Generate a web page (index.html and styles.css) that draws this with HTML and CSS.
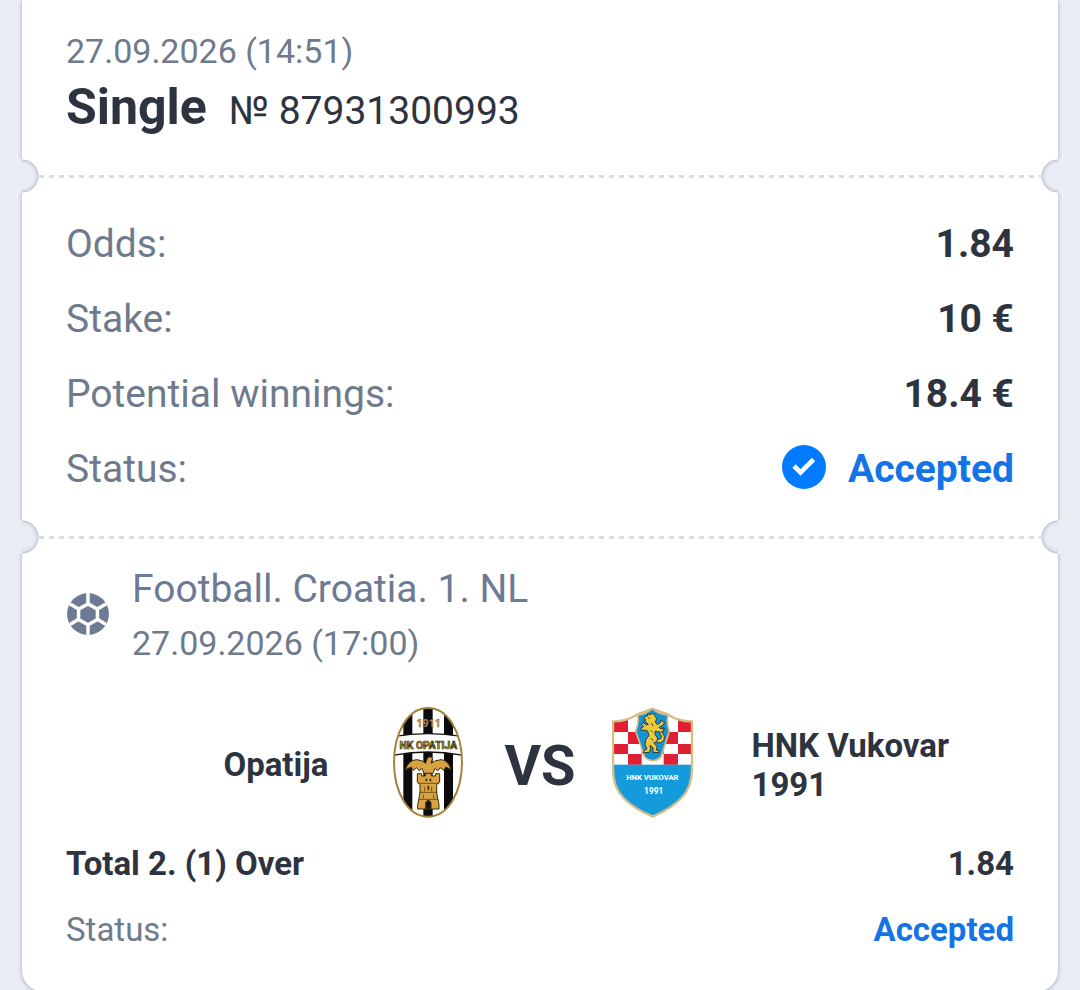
FILE: index.html
```html
<!DOCTYPE html>
<html lang="en">
<head>
<meta charset="utf-8">
<meta name="viewport" content="width=device-width, initial-scale=1">
<title>Bet slip</title>
<link rel="stylesheet" href="styles.css">
</head>
<body>
<main class="slip">
  <header class="section head">
    <time class="date">27.09.2026 (14:51)</time>
    <div class="title-row">
      <h1 class="title">Single</h1>
      <span class="number">№ 87931300993</span>
    </div>
  </header>

  <div class="divider"></div>

  <dl class="section summary">
    <div class="row"><dt>Odds:</dt><dd>1.84</dd></div>
    <div class="row"><dt>Stake:</dt><dd>10 €</dd></div>
    <div class="row"><dt>Potential winnings:</dt><dd>18.4 €</dd></div>
    <div class="row">
      <dt>Status:</dt>
      <dd class="accepted">
        <svg class="check" viewBox="0 0 44 44" aria-hidden="true">
          <circle cx="22" cy="22" r="22" fill="#007bff"/>
          <path d="M12 21L18.500 27.500L31.500 14.500" fill="none" stroke="#fff" stroke-width="4.600"/>
        </svg>
        Accepted
      </dd>
    </div>
  </dl>

  <div class="divider"></div>

  <section class="section event">
    <div class="league">
      <svg class="ball" viewBox="-3 -3 126 126" aria-hidden="true">
        <defs><clipPath id="ball-clip"><circle cx="60" cy="60" r="60"/></clipPath></defs>
        <g clip-path="url(#ball-clip)">
          <rect width="120" height="120" fill="#6d7a93"/>
          <path d="M60 31L87 46V76L60 91L33 76V46Z" fill="#6d7a93" stroke="#fff" stroke-width="10"/>
          <path d="M60 -5V29M60 93V125M88 45L120 26M88 76L120 95M32 45L0 26M32 76L0 95" stroke="#fff" stroke-width="10"/>
        </g>
      </svg>
      <div>
        <h2 class="league-name">Football. Croatia. 1. NL</h2>
        <time class="date">27.09.2026 (17:00)</time>
      </div>
    </div>

    <div class="match">
      <span class="team home">Opatija</span>
      <svg class="crest" viewBox="19 19 246 333" role="img" aria-label="NK Opatija">
        <defs>
          <clipPath id="oval"><path id="oval-path" d="M142 22C202 22 244 95 244 185C244 275 202 348 142 348C82 348 40 275 40 185C40 95 82 22 142 22Z"/></clipPath>
        </defs>
        <g clip-path="url(#oval)">
          <rect x="35" y="19" width="215" height="333" fill="#fff"/>
          <path d="M68 19H95V352H68ZM128 19H156V352H128ZM190 19H217V352H190Z" fill="#0b0b0e"/>
          <path d="M36 108Q142 90 248 108V164Q142 144 36 164Z" fill="#fff" stroke="#16130c" stroke-width="4"/>
        </g>
        <use href="#oval-path" fill="none" stroke="#a08338" stroke-width="6"/>
        <text class="crest-text" x="144" y="79" font-size="32" fill="#c9a568" stroke="#54431f" stroke-width="1">1911</text>
        <text class="crest-text" x="143" y="145" font-size="31" fill="#e5a928" stroke="#2d2209" stroke-width="2">NK OPATIJA</text>
        <g fill="#d8a443" stroke="#3c2b0b" stroke-width="3" stroke-linejoin="round">
          <path d="M74 207Q84 178 108 177Q126 178 135 188L140 172Q149 164 156 173L151 188Q163 178 181 177Q203 178 211 207L195 199L190 209L178 201L172 210L163 203L157 218H130L124 203L115 210L108 201L98 209L92 199Z"/>
          <path d="M110 219H123V226H134V218H152V226H164V219H177V245L168 252V277L175 312V325H111V312L118 277V252L110 245Z"/>
          <path d="M112 248H175M116 275H170M116 296H172M132 258V272M153 258V272M128 281V293M159 281V293" fill="none" stroke-width="2"/>
          <path d="M135 325V306Q143 292 151 306V325Z" fill="#16130c"/>
          <path d="M137 234V242M149 234V242M143 255V268" stroke-width="5"/>
        </g>
      </svg>
      <span class="versus">VS</span>
      <svg class="crest" viewBox="35 19 246 333" role="img" aria-label="HNK Vukovar 1991">
        <defs>
          <clipPath id="shield"><path id="shield-path" d="M38 62Q78 62 110 42L156 24L203 42Q235 62 275 62V205Q275 260 243 292Q214 323 157 348Q99 323 70 292Q38 260 38 205Z"/></clipPath>
        </defs>
        <g clip-path="url(#shield)">
          <rect x="33" y="20" width="246" height="333" fill="#fff"/>
          <path d="M33 50H83V94H33ZM83 94H124V130H83ZM33 130H83V160H33ZM83 160H124V192H83ZM124 130H190V160H124ZM190 94H233V130H190ZM233 50H279V94H233ZM233 130H279V160H233ZM190 160H233V192H190Z" fill="#e01f32"/>
          <rect x="33" y="192" width="246" height="161" fill="#159bdc"/>
        </g>
        <use href="#shield-path" fill="none" stroke="#d7bd84" stroke-width="7"/>
        <path d="M112 43Q135 42 156 24Q177 42 203 43Q197 63 207 92L182 169Q157 191 133 169L106 92Q117 63 112 43Z" fill="#1693d1" stroke="#d7bd84" stroke-width="5"/>
        <g fill="#efc83d" stroke="#2b3f36" stroke-width="3" stroke-linejoin="round">
          <path d="M167 116Q184 119 183 106Q174 98 179 86Q185 78 193 83L188 91Q183 97 192 106Q194 127 171 127Z"/>
          <path d="M136 47L143 45L142 38L150 42L158 38L163 45L169 54L165 64L171 72L180 66L181 58L187 63L193 65L188 73L176 80L181 85L190 82L190 90L181 95L165 91L164 102L172 112L169 123L160 127L170 137L168 148L176 150L176 156L158 155L158 141L149 134L151 146L147 155L129 156L132 149L140 145L134 131L137 116L146 105L142 91L132 88L123 90L122 82L130 78L124 71L129 66L137 73L144 71L138 65L130 63L137 58L130 53Z"/>
          <path d="M144 52L149 53M153 68L158 76M151 89L157 95M152 113L158 120" fill="none"/>
        </g>
        <text class="crest-text" x="156" y="238" font-size="23" fill="#fff">HNK VUKOVAR</text>
        <text class="crest-text" x="160" y="280" font-size="25" fill="#fff">1991</text>
      </svg>
      <span class="team away">HNK Vukovar 1991</span>
    </div>

    <div class="line strong"><span>Total 2. (1) Over</span><span>1.84</span></div>
    <div class="line"><span>Status:</span><strong class="accepted-small">Accepted</strong></div>
  </section>
</main>
</body>
</html>
```
FILE: styles.css
```css
* {
  box-sizing: border-box;
}

body {
  margin: 0;
  background: #e9edf6;
  color: #2d3440;
  font-family: Roboto, "Liberation Sans", sans-serif;
  overflow: hidden;
}

.slip {
  margin: 0 22px;
  background: #fff;
  border-radius: 0 0 22px 22px;
  box-shadow: 0 1px 4px rgba(40, 45, 60, 0.35);
}

.section {
  margin: 0;
  padding: 0 44px;
}

.head {
  padding-top: 31px;
  padding-bottom: 22px;
}

.date {
  display: block;
  font-size: 34px;
  line-height: 40px;
  color: #6f7b8c;
}

.title-row {
  display: flex;
  align-items: baseline;
  gap: 22px;
  margin-top: 6px;
}

.title {
  margin: 0;
  font-size: 50px;
  line-height: 60px;
  font-weight: 700;
}

.number {
  font-size: 39px;
}

.divider {
  position: relative;
  height: 34px;
  background: repeating-linear-gradient(90deg, #d6dde3 0 5px, transparent 5px 10px) 17px center / calc(100% - 34px) 3px no-repeat;
}

/* Ticket notches: a strip of page colour hides the card's shadow. */
.divider::before,
.divider::after {
  content: "";
  position: absolute;
  top: 0;
  width: 22px;
  height: 34px;
}

.divider::before {
  left: -5px;
  background:
    linear-gradient(#e9edf6, #e9edf6) left / 5px 100% no-repeat,
    radial-gradient(circle at 5px 17px, #e9edf6 11px, #dfe3eb 14px, #c3c7ce 16px, transparent 17px);
}

.divider::after {
  right: -5px;
  background:
    linear-gradient(#e9edf6, #e9edf6) right / 5px 100% no-repeat,
    radial-gradient(circle at 17px 17px, #e9edf6 11px, #dfe3eb 14px, #c3c7ce 16px, transparent 17px);
}

.summary {
  padding-top: 13px;
  padding-bottom: 14px;
}

.row {
  display: flex;
  justify-content: space-between;
  align-items: center;
  height: 75px;
  font-size: 39px;
  line-height: 48px;
}

.row dt {
  color: #6f7b8c;
}

.row dd {
  margin: 0;
  font-weight: 700;
}

.row .accepted {
  display: flex;
  align-items: center;
  gap: 22px;
  color: #1473e6;
}

.check {
  width: 44px;
  height: 44px;
  margin-bottom: 4px;
}

.event {
  padding-top: 11px;
  padding-bottom: 42px;
}

.league {
  display: flex;
  align-items: center;
  gap: 22px;
}

.ball {
  width: 44px;
  height: 44px;
}

.league-name {
  margin: 0 0 10px;
  font-size: 39px;
  line-height: 48px;
  font-weight: 400;
  color: #6d7a93;
}

.match {
  display: grid;
  grid-template-columns: 1fr 82px 143px 82px 1fr;
  align-items: center;
  margin-top: 44px;
}

.team {
  padding-top: 4px;
  font-size: 33px;
  line-height: 39px;
  font-weight: 700;
}

.home {
  padding-right: 58px;
  text-align: right;
}

.away {
  max-width: 278px;
  padding-left: 58px;
}

.crest {
  width: 82px;
  height: 111px;
}

.crest-text {
  font-weight: 700;
  text-anchor: middle;
}

.versus {
  padding-top: 6px;
  font-size: 56px;
  font-weight: 700;
  text-align: center;
}

.line {
  display: flex;
  justify-content: space-between;
  margin-top: 26px;
  font-size: 33px;
  line-height: 40px;
  color: #6f7b8c;
}

.line.strong {
  color: #2d3440;
  font-weight: 700;
}

.accepted-small {
  color: #1473e6;
}
```
